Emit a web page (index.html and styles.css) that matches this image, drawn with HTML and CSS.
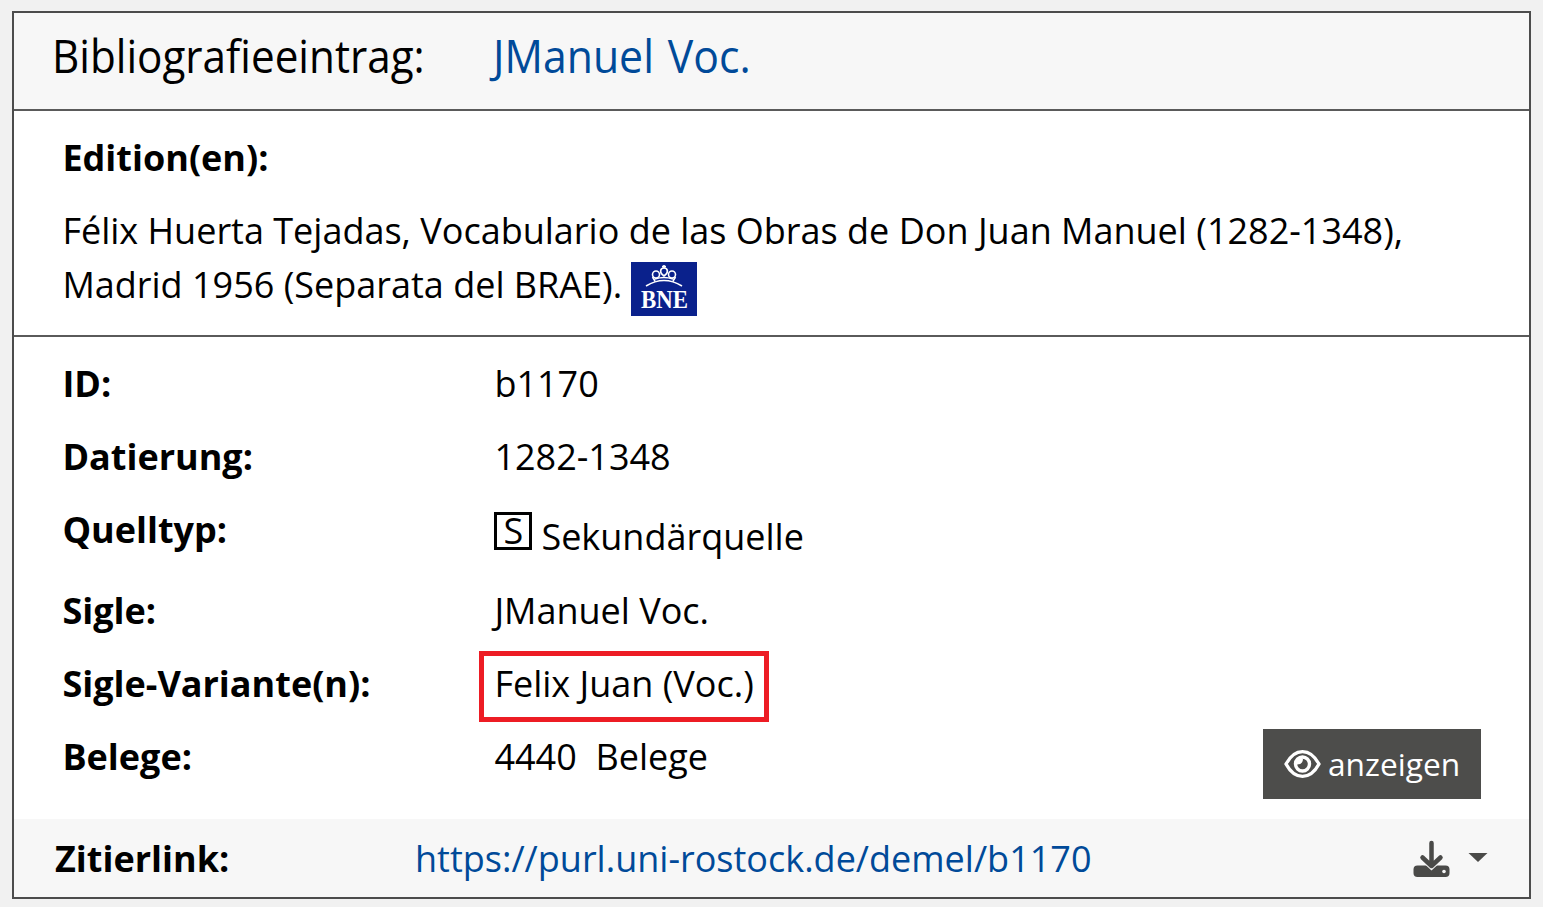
FILE: index.html
```html
<!DOCTYPE html>
<html lang="de"><head><meta charset="utf-8"><title>JManuel Voc.</title><link rel="stylesheet" href="styles.css"></head>
<body>
<main class="card">
<header class="head"><h1 class="title"><span class="condensed">Bibliografieeintrag:</span></h1><span class="name condensed">JManuel Voc.</span></header>
<section class="edition">
<h2 class="label">Edition(en):</h2>
<p class="text">Félix Huerta Tejadas, Vocabulario de las Obras de Don Juan Manuel (1282-1348),<br>Madrid 1956 (Separata del BRAE). <svg class="bne" width="66" height="54" viewBox="0 0 66 54"><rect width="66" height="54" fill="#0a218c"/><g fill="none" stroke="#fff" stroke-width="1.600"><path d="M15 24Q33 13 51 24M24 19L21.500 15M44.500 15L42 19"/><circle cx="25" cy="12.500" r="3.500"/><circle cx="41" cy="12.500" r="3.500"/><path d="M33 14C28 11 29 6 33 6S38 11 33 14M33 3V6M31 4.500H35M24 17Q33 14 42 17"/></g><text x="10" y="45.500" textLength="47" lengthAdjust="spacingAndGlyphs" class="bne-text">BNE</text></svg></p>
</section>
<section class="data">
<dl class="list">
<div class="row"><dt>ID:</dt><dd>b1170</dd></div>
<div class="row"><dt>Datierung:</dt><dd>1282-1348</dd></div>
<div class="row source"><dt>Quelltyp:</dt><dd><span class="type">S</span><span class="type-name">Sekundärquelle</span></dd></div>
<div class="row"><dt>Sigle:</dt><dd>JManuel Voc.</dd></div>
<div class="row"><dt>Sigle-Variante(n):</dt><dd><span class="marked">Felix Juan (Voc.)</span></dd></div>
<div class="row"><dt>Belege:</dt><dd>4440&nbsp; Belege</dd></div>
</dl>
<button class="show"><svg class="eye" width="38" height="30" viewBox="0 0 38 30" fill="none" stroke="#fff" stroke-width="3.400"><path d="M3 15C12-1.500 27-1.500 36 15C27 31.500 12 31.500 3 15Z" stroke-linejoin="round"/><circle cx="19.500" cy="15" r="7"/><path d="M14 13.500Q18 13.500 18 9.500" stroke-width="4"/></svg><span class="show-text">anzeigen</span></button>
</section>
<footer class="foot"><strong class="cite">Zitierlink:</strong><a class="link">https://purl.uni-rostock.de/demel/b1170</a>
<svg class="download" width="76" height="38" viewBox="0 0 76 38" fill="#4a4a48"><path d="M5.500 25.500H33.500q4 0 4 4v3.500q0 4-4 4H5.500q-4 0-4-4v-3.500q0-4 4-4z"/><path d="M13 24.500L19.500 30.500L26 24.500" fill="#f7f7f7"/><path d="M19.500 3V26M10.500 17.500L19.500 26L28.500 17.500" fill="none" stroke="#4a4a48" stroke-width="4.500" stroke-linecap="round" stroke-linejoin="round"/><circle cx="32" cy="31.500" r="1.800" fill="#f7f7f7"/><path d="M56.500 13h19l-9.500 9z"/></svg></footer>
</main>
</body></html>
```
FILE: styles.css
```css
* { box-sizing: border-box; }
body { margin: 0; height: 907px; padding: 11px 12px 8px; background: #f1f1f1; color: #000; font: 36px/54px "Open Sans", sans-serif; overflow: hidden; }
.card { width: 1519px; height: 888px; border: 2px solid #4c4c4c; background: #fff; }
.head { display: flex; height: 98px; padding: 12px 38px; background: #f7f7f7; border-bottom: 2px solid #5a5a5a; font-size: 45px; line-height: 62px; }
.title, .name { font-size: 45px; font-weight: 400; margin: 0; white-space: nowrap; }
.title { width: 441px; }
.condensed { display: inline-block; transform: scaleX(.938); transform-origin: left; }
.name.condensed { transform: scaleX(.95); word-spacing: 3px; }
.name, .link { color: #004a99; }
.edition { height: 226px; padding: 20px 48.400px; border-bottom: 2px solid #5a5a5a; }
.label { margin: 0 0 19px; font-size: 36px; line-height: 54px; }
.text { margin: 0; white-space: nowrap; }
.bne { vertical-align: top; margin: 4px 0 0 -.600px; }
.bne-text { font: bold 25px "Liberation Serif", serif; fill: #fff; }
.data { display: flex; justify-content: space-between; align-items: flex-end; height: 482px; padding: 20px 48px 20px 48.400px; }
.list { margin: 0; height: 442px; }
.row { display: flex; height: 73px; white-space: nowrap; }
.row.source { height: 81px; }
dt { width: 432px; font-weight: 700; }
dd { margin: 0; }
.source dd { display: flex; gap: 9px; }
.type { width: 38px; height: 38px; margin-top: 9px; border: 3px solid #000; font-size: 36px; line-height: 31px; text-align: center; }
.type-name { padding-top: 7px; }
.marked { display: block; width: 290px; height: 71px; margin: -6px 0 0 -15.400px; padding: 1px 10.400px; border: 5px solid #ed1c24; }
.show { display: flex; align-items: center; gap: 7px; width: 218px; height: 70px; padding: 0 0 0 20px; border: 0; background: #4d4d4b; color: #fff; font: 31.700px "Open Sans", sans-serif; }
.show-text { padding-bottom: 2px; }
.eye { flex: none; }
.foot { display: flex; align-items: center; height: 78px; padding: 2px 41px 0; background: #f7f7f7; }
.cite { width: 360px; }
.download { margin-left: auto; }
```
